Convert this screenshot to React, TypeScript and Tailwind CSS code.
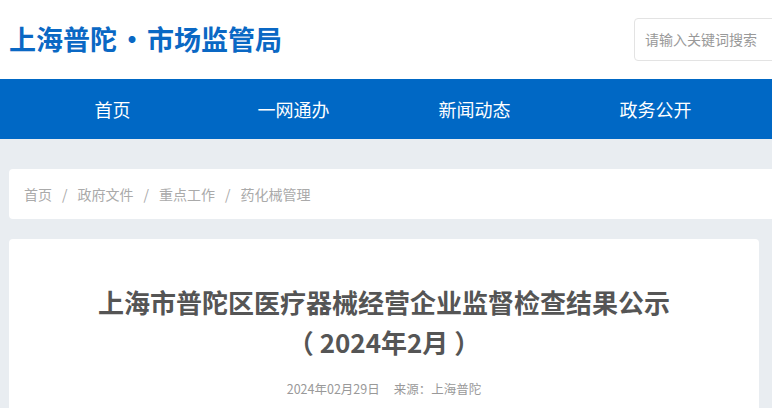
import React from 'react';

const navItems = ['首页', '一网通办', '新闻动态', '政务公开'];
const crumbs = ['首页', '政府文件', '重点工作', '药化械管理'];

const App = () => {
  return (
    <div
      className="w-[772px] h-[408px] overflow-hidden bg-[#e9edf1]"
      style={{ fontFamily: '"Noto Sans CJK SC", "Noto Sans", sans-serif' }}
    >
      {/* Header */}
      <div className="h-[79px] bg-white flex items-center justify-between">
        <h1 className="pl-[9px] text-[27px] font-bold text-[#0a68c4] flex items-center">
          <span>上海普陀</span>
          <span className="w-[30px] text-center">•</span>
          <span>市场监管局</span>
        </h1>
        <div className="w-[160px] h-[43px] mr-[-22px] border border-[#e3e3e3] rounded-[4px] flex items-center pl-[10px] text-[14px] text-[#999]">
          请输入关键词搜索
        </div>
      </div>

      {/* Nav */}
      <div className="h-[60px] bg-[#0068c5] flex items-center pl-[22px]">
        {navItems.map((item) => (
          <div key={item} className="w-[181px] text-center text-white text-[18px]">
            {item}
          </div>
        ))}
      </div>

      {/* Breadcrumb */}
      <div className="pl-[9px] pt-[30px]">
        <div className="h-[50px] bg-white rounded-l-[4px] flex items-center pl-[15px] text-[14px] text-[#aaa]">
          {crumbs.map((c, i) => (
            <React.Fragment key={c}>
              {i > 0 && <span className="px-[10px]">/</span>}
              <span>{c}</span>
            </React.Fragment>
          ))}
        </div>
      </div>

      {/* Article */}
      <div className="px-[9px] pt-[20px]">
        <div className="bg-white rounded-[4px] w-[750px] pt-[43px] pb-[20px]">
          <h2 className="text-center text-[26px] font-bold text-[#555] leading-[40px]">
            上海市普陀区医疗器械经营企业监督检查结果公示
            <br />
            （ 2024年2月 ）
          </h2>
          <div className="mt-[18px] text-center text-[12.5px] text-[#999]">
            <span>2024年02月29日</span>
            <span className="ml-[14px]">来源：</span>
            <span>上海普陀</span>
          </div>
        </div>
      </div>
    </div>
  );
};

export default App;
